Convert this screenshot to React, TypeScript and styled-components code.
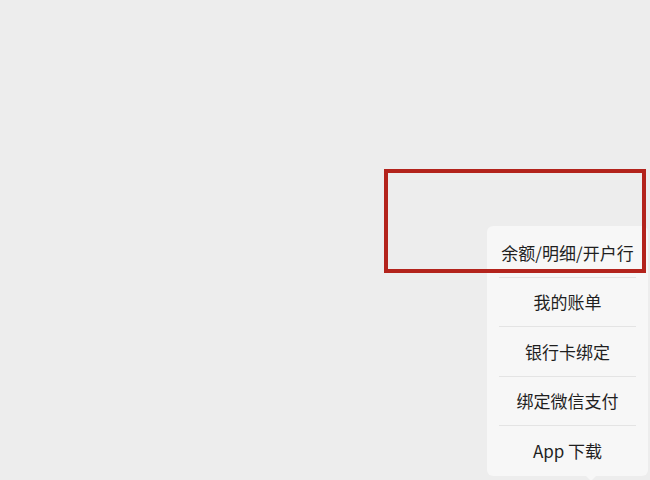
import React from "react";
import styled, { createGlobalStyle } from "styled-components";

const Global = createGlobalStyle`
  html, body { margin: 0; padding: 0; background: #ededed; }
  body { font-family: "Noto Sans CJK SC", "Noto Sans", sans-serif; }
`;

const Page = styled.div`
  position: relative;
  width: 650px;
  height: 480px;
  background: #ededed;
  overflow: hidden;
`;

const Menu = styled.div`
  position: absolute;
  left: 487px;
  top: 226px;
  width: 161px;
  background: #f7f7f7;
  border-radius: 6px;
  padding: 2px 0 0;
  display: flex;
  flex-direction: column;
`;

const Item = styled.div<{ $last?: boolean }>`
  height: 49.5px;
  display: flex;
  align-items: center;
  justify-content: center;
  font-size: 17px;
  color: #1f1f1f;
  margin: 0 12px;
  border-bottom: ${(p) => (p.$last ? "none" : "1px solid #e4e4e4")};
  box-sizing: border-box;
  white-space: nowrap;
`;

const Arrow = styled.div`
  position: absolute;
  left: 98px;
  bottom: -5px;
  width: 0;
  height: 0;
  border-left: 6px solid transparent;
  border-right: 6px solid transparent;
  border-top: 6px solid #f7f7f7;
`;

const Highlight = styled.div`
  position: absolute;
  left: 384px;
  top: 169px;
  width: 262px;
  height: 104px;
  border: 4px solid #b3231c;
  box-sizing: border-box;
`;

const items = ["余额/明细/开户行", "我的账单", "银行卡绑定", "绑定微信支付", "App 下载"];

export default function App() {
  return (
    <Page>
      <Global />
      <Menu>
        {items.map((t, i) => (
          <Item key={t} $last={i === items.length - 1}>
            {t}
          </Item>
        ))}
        <Arrow />
      </Menu>
      <Highlight />
    </Page>
  );
}
